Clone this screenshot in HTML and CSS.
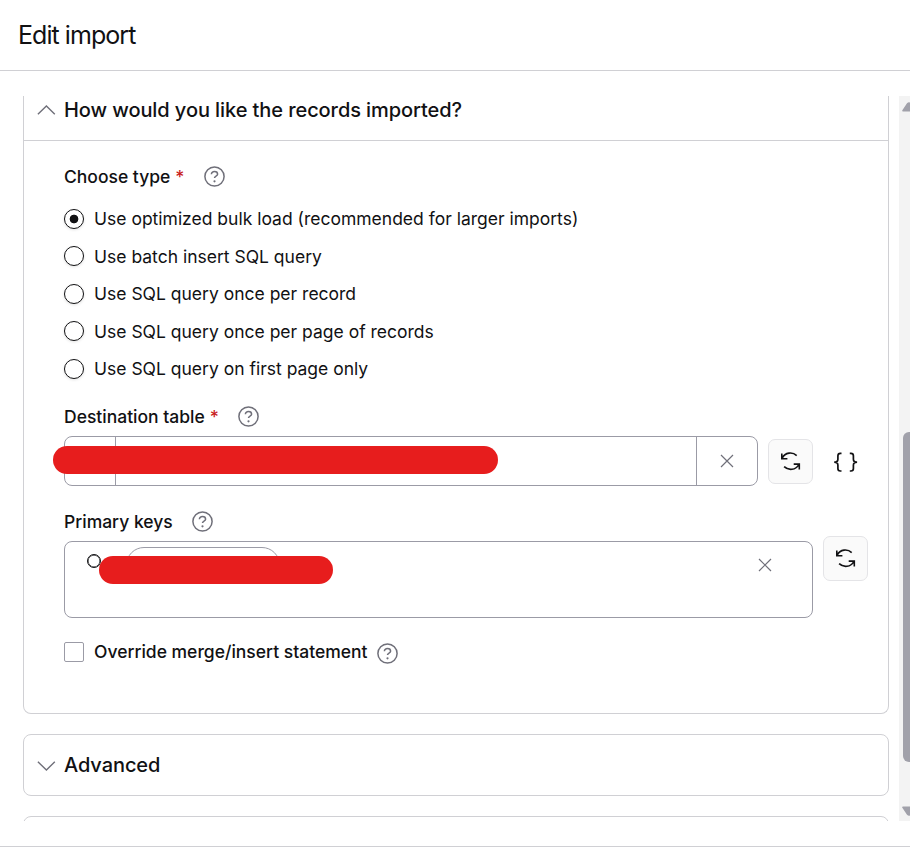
FILE: index.html
```
<!DOCTYPE html>
<html lang="en">
<head>
    <meta charset="UTF-8">
    <meta name="viewport" content="width=device-width, initial-scale=1.0">
    <title>Edit import</title>
    <link rel="stylesheet" href="styles.css">
</head>
<body>

<!-- Shared icons -->
<svg class="sprite" width="0" height="0">
    <symbol id="help" viewBox="0 0 22 22">
        <circle cx="10.5" cy="10.5" r="9.6" stroke-width="1.5"/>
        <path d="M7.4 8.3C7.4 6.6 8.7 5.600 10.5 5.600s3.100 1 3.100 2.600c0 2-3.100 1.900-3.100 3.800" stroke-width="1.5"/>
        <circle cx="10.5" cy="15.3" r="1.1" class="dot"/>
    </symbol>
    <symbol id="refresh" viewBox="0 -0.9 20 20">
        <path d="M1.200 6.200C4.100.3 11.500-.3 15.700 3.700M.8 1.500v5.300h5.600M3.100 14.800c4.200 4 11.800 3.600 14.700-2.200M18.300 17.500v-5.300h-5.600"/>
    </symbol>
    <symbol id="close" viewBox="0 0 14 14">
        <path d="M1 1l12 12M13 1L1 13"/>
    </symbol>
</svg>

<header class="page-header">
    <h1>Edit import</h1>
</header>

<div class="scroll-area">
    <main class="sections">
        <section class="card card-open">
            <div class="card-header">
                <svg class="chevron" viewBox="0 0 18 10"><path d="M.9 9.200L9.400 1l8.400 8.200"/></svg>
                <h2>How would you like the records imported?</h2>
            </div>

            <form class="card-body">
                <div class="field-label">
                    <span>Choose type</span><span class="required">*</span>
                    <svg class="help"><use href="#help"/></svg>
                </div>
                <div class="radio-group">
                    <label><input type="radio" name="type" checked><span>Use optimized bulk load (recommended for larger imports)</span></label>
                    <label><input type="radio" name="type"><span>Use batch insert SQL query</span></label>
                    <label><input type="radio" name="type"><span>Use SQL query once per record</span></label>
                    <label><input type="radio" name="type"><span>Use SQL query once per page of records</span></label>
                    <label><input type="radio" name="type"><span>Use SQL query on first page only</span></label>
                </div>

                <div class="field-label destination-label">
                    <span>Destination table</span><span class="required">*</span>
                    <svg class="help"><use href="#help"/></svg>
                </div>
                <div class="field-row">
                    <div class="table-input">
                        <div class="input-icon"></div>
                        <div class="input-value"></div>
                        <div class="input-clear"><svg class="close"><use href="#close"/></svg></div>
                        <div class="redacted redacted-table"></div>
                    </div>
                    <button type="button" class="refresh-button"><svg><use href="#refresh"/></svg></button>
                    <svg class="braces" viewBox="0 0 26 20">
                        <path d="M8.500 1.300H7.300C5.500 1.300 4.900 2.100 4.900 3.800V7.200c0 2-1 3-3.700 3 2.700 0 3.700 1 3.700 3v3.400C4.900 18.300 5.500 19 7.300 19H8.500M16.800 1.300H18c1.800 0 2.400.8 2.400 2.500V7.200c0 2 1 3 3.700 3-2.700 0-3.700 1-3.700 3v3.400c0 1.700-.6 2.400-2.400 2.400H16.800"/>
                    </svg>
                </div>

                <div class="field-label keys-label">
                    <span>Primary keys</span>
                    <svg class="help"><use href="#help"/></svg>
                </div>
                <div class="field-row">
                    <div class="keys-input">
                        <div class="key-dot"></div>
                        <div class="key-pill"></div>
                        <svg class="close"><use href="#close"/></svg>
                        <div class="redacted redacted-keys"></div>
                    </div>
                    <button type="button" class="refresh-button keys-refresh"><svg><use href="#refresh"/></svg></button>
                </div>

                <div class="override">
                    <label><input type="checkbox"><span>Override merge/insert statement</span></label>
                    <svg class="help"><use href="#help"/></svg>
                </div>
            </form>
        </section>

        <section class="card card-closed">
            <svg class="chevron" viewBox="0 0 18 10"><path d="M.9.8l8.500 8.200L17.800.8"/></svg>
            <h2>Advanced</h2>
        </section>

        <section class="card card-closed"></section>
    </main>

    <div class="scrollbar">
        <svg class="arrow" viewBox="0 0 14 10"><path d="M1 9.500C0 9.500 0 8.700.5 8L5 1.300Q7-.6 9 1.300L13.500 8c.5.7.5 1.500-.5 1.500z"/></svg>
        <div class="thumb"></div>
        <svg class="arrow" viewBox="0 0 14 10"><path d="M1 .5C0 .5 0 1.300.5 2L5 8.700q2 1.900 4 0L13.500 2c.5-.7.5-1.500-.5-1.500z"/></svg>
    </div>
</div>

<footer class="page-footer"></footer>

</body>
</html>
```
FILE: styles.css
```
* {
    box-sizing: border-box;
}

body {
    margin: 0;
    height: 857px;
    display: flex;
    flex-direction: column;
    overflow: hidden;
    background-color: #fff;
    color: #111113;
    font-family: Inter, sans-serif;
    font-size: 17.5px;
}

h1, h2 {
    margin: 0;
}

svg {
    display: block;
    flex: none;
    fill: none;
    stroke: #6f6f79;
}

.sprite {
    position: absolute;
}

.page-header {
    height: 71px;
    padding: 20px 18px 0;
    border-bottom: 1px solid #d0d0d4;
}

h1 {
    font-size: 25px;
    line-height: 30px;
    font-weight: 400;
    letter-spacing: -0.95px;
}

h2 {
    font-size: 20px;
    line-height: 28px;
    font-weight: 500;
    letter-spacing: -0.08px;
}

.scroll-area {
    display: flex;
    height: 725px;
    margin-top: 25px;
    overflow: hidden;
}

.sections {
    flex: 1;
    display: flex;
    flex-direction: column;
    gap: 20px;
    padding: 0 10px 0 23px;
}

.card {
    flex: none;
    border: 1px solid #d0d0d4;
    border-radius: 8px;
}

.card-open {
    height: 618px;
    border-top: none;
    border-radius: 0 0 8px 8px;
}

.card-header {
    display: flex;
    height: 45px;
    padding-left: 13px;
    border-bottom: 1px solid #d0d0d4;
}

.card-closed {
    display: flex;
    height: 62px;
    padding: 16px 0 0 13px;
}

.chevron {
    width: 18px;
    height: 10px;
    margin: 9px 9px 0 0;
    overflow: visible;
    stroke-width: 1.4;
}

.card-closed .chevron {
    margin-top: 10px;
}

.card-body {
    padding: 23px 20px 0 40px;
}

.field-label {
    display: flex;
    align-items: center;
    height: 25px;
    padding-bottom: 1px;
    font-weight: 500;
}

.required {
    margin-left: 5px;
    color: #c91d1d;
}

.help {
    width: 22px;
    height: 22px;
    margin: 1px 0 0 19px;
}

.field-label:first-child .help {
    margin-left: 20px;
}

.dot {
    fill: #6f6f79;
    stroke: none;
}

.radio-group {
    display: flex;
    flex-direction: column;
    gap: 13.5px;
    margin-top: 17.6px;
}

label {
    display: flex;
    align-items: center;
    height: 24px;
}

input {
    appearance: none;
    width: 20px;
    height: 20px;
    margin: 0 10px 0 0;
    background-color: #fff;
}

input[type="radio"] {
    border: 1px solid #111113;
    border-radius: 50%;
    box-shadow: 0 1px 3px rgba(0, 0, 0, 0.12);
}

input[type="radio"]:checked {
    background-image: radial-gradient(circle, #111113 4px, transparent 4.7px);
}

input[type="checkbox"] {
    border: 1px solid #9b9ba6;
    border-radius: 2px;
}

.destination-label {
    margin-top: 24.4px;
}

.field-row {
    display: flex;
    margin-top: 6px;
}

.table-input {
    position: relative;
    display: flex;
    width: 694px;
    height: 50px;
    border: 1px solid #9b9ba6;
    border-radius: 8px;
}

.input-icon {
    width: 50px;
}

.input-value {
    flex: 1;
    border: solid #9b9ba6;
    border-width: 0 1px;
}

.input-clear {
    display: flex;
    align-items: center;
    justify-content: center;
    width: 60px;
}

.close {
    width: 14px;
    height: 14px;
    stroke-width: 1.2;
}

/* Bars that cover the private values */
.redacted {
    position: absolute;
    height: 28.5px;
    border-radius: 15px;
    background-color: #e71d1d;
}

.redacted-table {
    left: -12px;
    top: 8.6px;
    width: 445px;
}

.redacted-keys {
    left: 33.7px;
    top: 13.8px;
    width: 234.5px;
}

.refresh-button {
    display: flex;
    align-items: center;
    justify-content: center;
    width: 45px;
    height: 45px;
    margin: 3px 0 0 10px;
    padding: 0;
    background-color: #fafafa;
    border: 1px solid #e4e4e7;
    border-radius: 7px;
}

.refresh-button svg {
    width: 20px;
    height: 20px;
    stroke: #111113;
    stroke-width: 1.6;
}

.braces {
    width: 26px;
    height: 20px;
    margin: 16px 0 0 20px;
    stroke: #111113;
    stroke-width: 1.7;
}

.keys-label {
    margin-top: 24px;
}

.keys-input {
    position: relative;
    display: flex;
    width: 749px;
    height: 77px;
    padding: 5px 40px 0 22px;
    border: 1px solid #9b9ba6;
    border-radius: 8px;
}

/* Inset shadow keeps the ring thicker than one pixel */
.key-dot {
    width: 14px;
    height: 14px;
    margin-top: 7px;
    border: 1px solid #111113;
    border-radius: 50%;
    box-shadow: inset 0 0 0 0.5px #111113;
}

.key-pill {
    width: 154px;
    height: 36px;
    margin-left: 25px;
    border: 1px solid #9b9ba6;
    border-radius: 18px;
}

.keys-input .close {
    margin: 11px 0 0 auto;
}

.keys-refresh {
    margin-top: -5px;
}

.override {
    display: flex;
    margin-top: 22px;
    font-weight: 500;
}

.override span {
    padding-bottom: 1px;
}

.override .help {
    margin: 3px 0 0 9.5px;
}

.scrollbar {
    display: flex;
    flex-direction: column;
    width: 11px;
    height: 725px;
    padding: 6px 0 5px 3px;
    overflow: hidden;
    background-color: #f3f3f3;
}

.thumb {
    width: 14px;
    height: 330px;
    margin: 320px 0 auto 1px;
    border-radius: 6px;
    background-color: #a1a1aa;
}

.arrow {
    width: 14px;
    height: 10px;
    fill: #a1a1aa;
    stroke: none;
}

.page-footer {
    height: 11px;
    margin-top: 25px;
    border-top: 1px solid #d0d0d4;
}
```
